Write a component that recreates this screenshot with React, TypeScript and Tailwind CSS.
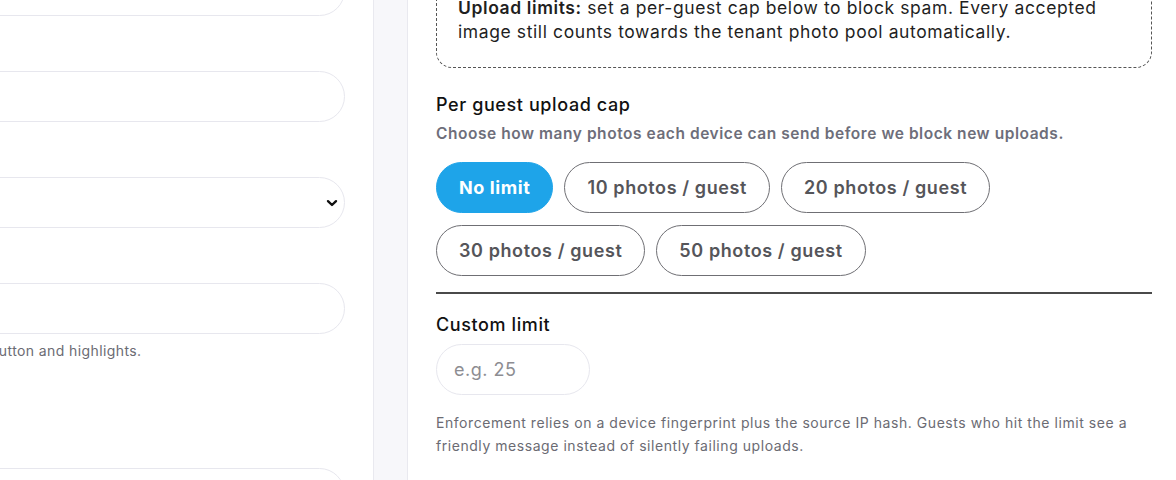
import React, { useState } from "react";

const capOptions = [
  { id: "none", label: "No limit" },
  { id: "10", label: "10 photos / guest" },
  { id: "20", label: "20 photos / guest" },
  { id: "30", label: "30 photos / guest" },
  { id: "50", label: "50 photos / guest" },
];

function Field({ label, children }: { label: string; children: React.ReactNode }) {
  return (
    <div>
      <label className="mb-[7px] block h-[20px] text-[15px] font-medium text-[#111]">{label}</label>
      {children}
    </div>
  );
}

function TextInput({ value }: { value: string }) {
  return (
    <input
      defaultValue={value}
      className="block h-[51px] w-full rounded-full border border-[#e7e7ee] bg-white px-5 text-[16px] text-[#111] outline-none"
    />
  );
}

export default function App() {
  const [cap, setCap] = useState("none");

  return (
    <div className="flex h-[480px] w-full overflow-hidden bg-white font-['Inter','Liberation_Sans',sans-serif] text-[#1c1c1e]">
      {/* Left settings column (scrolled off to the left) */}
      <div className="flex w-[374px] shrink-0 justify-end overflow-hidden border-r border-[#e9e9ef] bg-white pr-[28px]">
        <div className="-mt-[62px] flex w-[888px] shrink-0 flex-col">
          <div className="flex flex-col gap-[28px]">
            <Field label="Event name">
              <TextInput value="" />
            </Field>
            <Field label="Gallery headline">
              <TextInput value="" />
            </Field>
            <Field label="Theme">
              <div className="relative">
                <select className="block h-[51px] w-full appearance-none rounded-full border border-[#e7e7ee] bg-white px-5 text-[16px] outline-none">
                  <option></option>
                </select>
                <svg
                  className="pointer-events-none absolute right-[7px] top-1/2 h-[12px] w-[12px] -translate-y-1/2"
                  viewBox="0 0 12 12"
                  fill="none"
                  stroke="#111"
                  strokeWidth="2.4"
                  strokeLinecap="round"
                  strokeLinejoin="round"
                >
                  <path d="M2 4.2l4 3.8 4-3.8" />
                </svg>
              </div>
            </Field>
            <Field label="Accent colour">
              <TextInput value="" />
              <p className="mt-[8px] whitespace-nowrap text-[14px] leading-[18px] tracking-[0.4px] text-[#6b6b73]">
                Pick the accent colour used on the guest upload page, including the upload button and highlights.
              </p>
            </Field>
          </div>
          <div className="mt-[81px]">
            <Field label="Welcome message">
              <TextInput value="" />
            </Field>
          </div>
        </div>
      </div>

      {/* Gutter */}
      <div className="w-[34px] shrink-0 border-r border-[#e9e9ef] bg-[#f7f7fa]" />

      {/* Right: upload limits */}
      <div className="min-w-0 flex-1 bg-white pl-[28px] pr-[24px]">
        <div className="-mt-[26px] flex flex-col">
          <div className="rounded-[16px] border-[1.5px] border-dashed border-[#555] px-[21px] pb-[23px] pt-[21px] text-[17.5px] leading-[24px] tracking-[0.6px] text-[#1f1f1f]">
            <span className="font-semibold">Upload limits:</span> set a per-guest cap below to block spam. Every accepted
            image still counts towards the tenant photo pool automatically.
          </div>

          <h3 className="mt-[25px] text-[18px] font-medium leading-[24px] tracking-[0.6px] text-[#111]">
            Per guest upload cap
          </h3>
          <p className="mt-[7px] text-[15.5px] font-semibold leading-[20px] tracking-[0.55px] text-[#6e6e7a]">
            Choose how many photos each device can send before we block new uploads.
          </p>

          <div className="mt-[18px] flex flex-wrap gap-x-[11px] gap-y-[12px]">
            {capOptions.map((o) => {
              const active = cap === o.id;
              return (
                <button
                  key={o.id}
                  type="button"
                  onClick={() => setCap(o.id)}
                  className={
                    active
                      ? "h-[51px] rounded-full border border-[#1ea4e9] bg-[#1ea4e9] px-[22px] text-[18px] font-bold tracking-[0.6px] text-white"
                      : "h-[51px] rounded-full border border-[#6f6f74] bg-white px-[22px] text-[18px] font-semibold tracking-[0.6px] text-[#55555a]"
                  }
                >
                  {o.label}
                </button>
              );
            })}
          </div>

          <div className="mt-[16px] h-[2px] bg-[#4a4a4a]" />

          <label className="mt-[19px] text-[18px] font-medium leading-[24px] tracking-[0.6px] text-[#111]">
            Custom limit
          </label>
          <input
            placeholder="e.g. 25"
            className="mt-[7px] h-[51px] w-[154px] rounded-full border border-[#e7e7ee] bg-white px-[17px] text-[18px] tracking-[0.5px] text-[#111] outline-none placeholder:text-[#8d8d92]"
          />

          <p className="mt-[16px] text-[14px] leading-[23px] tracking-[0.55px] text-[#6b6b73]">
            Enforcement relies on a device fingerprint plus the source IP hash. Guests who hit the limit see a friendly
            message instead of silently failing uploads.
          </p>
        </div>
      </div>
    </div>
  );
}
